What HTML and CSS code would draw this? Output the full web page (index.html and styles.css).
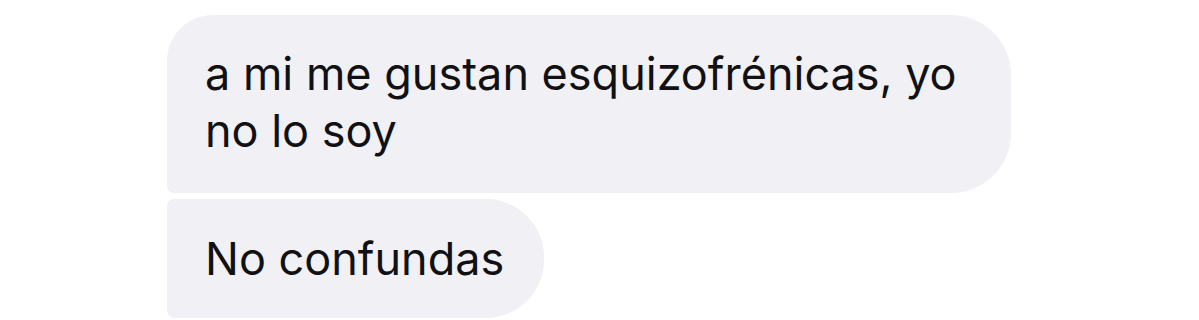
FILE: index.html
```html
<!DOCTYPE html>
<html lang="es">
<head>
<meta charset="utf-8">
<link rel="stylesheet" href="styles.css">
</head>
<body>
<div class="thread">
  <div class="bubble bubble-first">a mi me gustan esquizofrénicas, yo no lo soy</div>
  <div class="bubble bubble-last">No confundas</div>
</div>
</body>
</html>
```
FILE: styles.css
```css
html, body {
  margin: 0;
  padding: 0;
  background: #ffffff;
}
.thread {
  display: flex;
  flex-direction: column;
  align-items: flex-start;
  gap: 6px;
  padding: 15px 0 0 167px;
}
.bubble {
  box-sizing: border-box;
  background: #f0f0f5;
  color: #111114;
  font-family: Inter, "Liberation Sans", Arial, sans-serif;
  font-size: 45px;
  line-height: 57px;
  padding: 30px 40px 34px 38px;
}
.bubble-first {
  width: 844px;
  border-radius: 46px 60px 60px 7px;
}
.bubble-last {
  padding: 31px 40px 31px 38px;
  border-radius: 7px 58px 58px 8px;
}
```
